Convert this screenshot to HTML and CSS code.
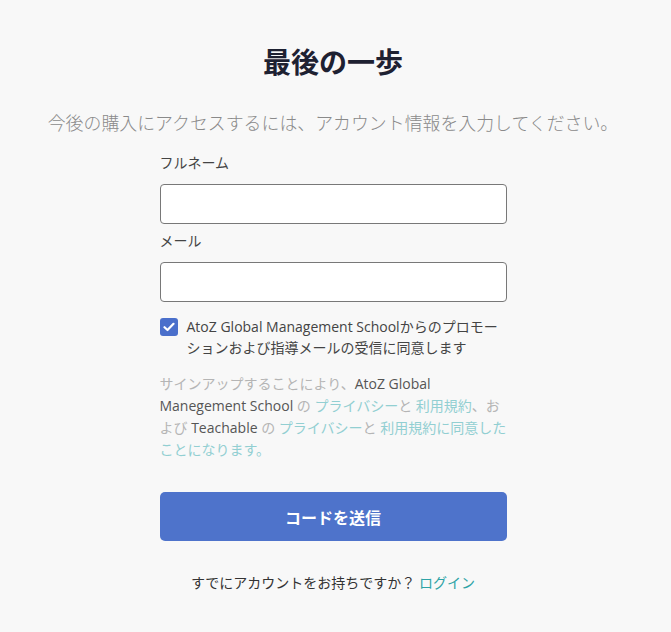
FILE: index.html
```html
<!DOCTYPE html>
<html lang="ja">
<head>
<meta charset="utf-8">
<link rel="stylesheet" href="styles.css">
</head>
<body>
<main class="page">
  <h1 class="title">最後の一歩</h1>
  <p class="subtitle">今後の購入にアクセスするには、アカウント情報を入力してください。</p>
  <form class="form">
    <label class="label" for="name">フルネーム</label>
    <input class="input" id="name" type="text">
    <label class="label label-second" for="email">メール</label>
    <input class="input" id="email" type="email">
    <div class="consent">
      <span class="checkbox">
        <svg width="12" height="10" viewBox="0 0 12 10"><path d="M1.5 5.2 L4.5 8 L10.5 1.8" fill="none" stroke="#fff" stroke-width="2.2" stroke-linecap="round" stroke-linejoin="round"/></svg>
      </span>
      <span class="consent-text">AtoZ Global Management Schoolからのプロモーションおよび指導メールの受信に同意します</span>
    </div>
    <p class="legal">サインアップすることにより、<b>AtoZ Global Manegement School</b> の <a class="link">プライバシー</a>と <a class="link">利用規約</a>、および <b>Teachable</b> の <a class="link">プライバシー</a>と <a class="link">利用規約に同意したことになります。</a></p>
    <button class="button" type="button">コードを送信</button>
  </form>
  <p class="footer">すでにアカウントをお持ちですか？ <a class="login">ログイン</a></p>
</main>
</body>
</html>
```

FILE: styles.css
```css
html, body {
  margin: 0;
  padding: 0;
  background: #f8f8f8;
}
body {
  font-family: "Open Sans", "Noto Sans CJK JP", sans-serif;
  color: #444;
}
.page {
  display: flex;
  flex-direction: column;
  align-items: center;
  padding-top: 41px;
  padding-right: 5px;
}
.title {
  margin: 0;
  font-size: 28px;
  line-height: 40px;
  font-weight: 700;
  color: #1e2132;
  font-family: "Noto Sans CJK JP", sans-serif;
}
.subtitle {
  margin: 28px 0 0;
  font-size: 17.9px;
  line-height: 26px;
  color: #8a8a8a;
  font-family: "Noto Sans CJK JP", sans-serif;
  font-weight: 300;
  white-space: nowrap;
}
.form {
  width: 347px;
  display: flex;
  flex-direction: column;
  margin-top: 18px;
}
.label {
  font-size: 14px;
  line-height: 20px;
  color: #444;
}
.label-second {
  margin-top: 7px;
}
.input {
  margin: 11px 0 0;
  box-sizing: border-box;
  height: 40px;
  width: 100%;
  border: 1px solid #787878;
  border-radius: 4px;
  background: #fff;
  padding: 0 10px;
  font-size: 14px;
}
.consent {
  display: flex;
  align-items: flex-start;
  gap: 9px;
  margin-top: 14px;
}
.checkbox {
  flex: none;
  width: 18px;
  height: 18px;
  margin-top: 2px;
  border-radius: 3px;
  background: #4a6fcb;
  display: flex;
  align-items: center;
  justify-content: center;
}
.consent-text {
  font-size: 14px;
  line-height: 21px;
  color: #444;
}
.legal {
  margin: 15px 0 0;
  font-size: 14px;
  line-height: 22px;
  color: #b5b5b5;
}
.legal b {
  font-weight: 400;
  color: #555;
}
.link {
  color: #92cfd2;
}
.button {
  margin-top: 31px;
  height: 49px;
  border: none;
  border-radius: 5px;
  background: #4e73cb;
  color: #fff;
  font-family: "Noto Sans CJK JP", sans-serif;
  font-size: 16px;
  font-weight: 700;
}
.footer {
  margin: 32px 0 0;
  font-size: 14px;
  line-height: 20px;
  color: #333;
}
.login {
  color: #2ea3a6;
}
```
